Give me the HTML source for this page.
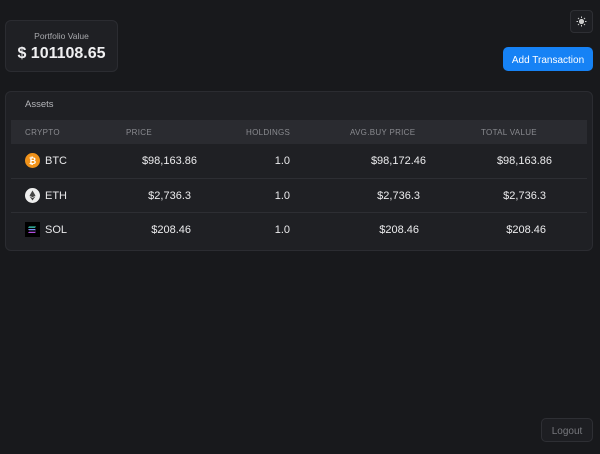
<!DOCTYPE html>
<html><head><style>
*{margin:0;padding:0;box-sizing:border-box}
body{width:600px;height:454px;background:#18191c;font-family:"Liberation Sans",sans-serif;color:#e8e8ea;position:relative;overflow:hidden}
.a{position:absolute}
.card{background:#1f2024;border:1px solid #2b2c31;border-radius:6px}
.h{font-size:8px;color:#8a8b90;letter-spacing:.3px;top:128px}
.v{font-size:11px;color:#ececee;text-align:right}
.sep{left:11px;width:576px;height:1px;background:#2d2e33}
</style></head><body>
<div class="a" style="left:570px;top:10px;width:23px;height:23px;border:1px solid #2e2f34;border-radius:4px;background:#1d1e22">
<svg width="23" height="23" viewBox="0 0 23 23" style="position:absolute;left:-1px;top:-1px"><circle cx="11.5" cy="11.5" r="2.6" fill="#ccc"/><g stroke="#ccc" stroke-width="1"><path d="M11.5 6.5v1.5M11.5 15v1.5M6.5 11.5h1.5M15 11.5h1.5M8 8l1 1M14 14l1 1M8 15l1-1M14 9l1-1"/></g></svg></div>
<div class="a card" style="left:5px;top:20px;width:113px;height:52px">
<div class="a" style="left:0;right:0;top:10px;text-align:center;font-size:8.5px;color:#a8a9ad">Portfolio Value</div>
<div class="a" style="left:0;right:0;top:24px;text-align:center;font-size:16px;font-weight:bold;color:#f0f0f2">$ 101108.65</div></div>
<div class="a" style="left:503px;top:47px;width:90px;height:24px;background:#1682f5;border-radius:5px;color:#fff;font-size:10px;text-align:center;line-height:27px">Add Transaction</div>
<div class="a card" style="left:5px;top:91px;width:588px;height:160px"></div>
<div class="a" style="left:25px;top:99px;font-size:9.5px;color:#b4b5b9">Assets</div>
<div class="a" style="left:11px;top:120px;width:576px;height:24px;background:#2a2b30"></div>
<div class="a h" style="left:25px">CRYPTO</div>
<div class="a h" style="left:126px">PRICE</div>
<div class="a h" style="left:246px">HOLDINGS</div>
<div class="a h" style="left:350px">AVG.BUY PRICE</div>
<div class="a h" style="left:481px">TOTAL VALUE</div>
<div class="a sep" style="top:178px"></div>
<div class="a sep" style="top:212px"></div>
<svg class="a" style="left:25px;top:153px" width="15" height="15"><circle cx="7.5" cy="7.5" r="7.5" fill="#f0921a"/><text x="7.5" y="11" font-size="9" font-weight="bold" fill="#fff" text-anchor="middle" font-family="Liberation Sans">₿</text></svg>
<svg class="a" style="left:25px;top:188px" width="15" height="15"><circle cx="7.5" cy="7.5" r="7.5" fill="#eee"/><path d="M7.5 2.5L4.5 7.6 7.5 9.3 10.5 7.6Z M4.5 8.3L7.5 12.5 10.5 8.3 7.5 10Z" fill="#444"/></svg>
<svg class="a" style="left:25px;top:222px" width="15" height="15"><rect width="15" height="15" fill="#000"/><path d="M4 4.5h7l-1 1.3H3Z" fill="#3fd8c0"/><path d="M3 7h7l1 1.2H4Z" fill="#7a8ef0"/><path d="M4 9.7h7l-1 1.3H3Z" fill="#b04ee0"/></svg>
<div class="a" style="left:45px;top:155px;font-size:11px">BTC</div>
<div class="a" style="left:45px;top:190px;font-size:11px">ETH</div>
<div class="a" style="left:45px;top:224px;font-size:11px">SOL</div>
<div class="a v" style="right:403px;top:155px">$98,163.86</div>
<div class="a v" style="right:409px;top:190px">$2,736.3</div>
<div class="a v" style="right:409px;top:224px">$208.46</div>
<div class="a v" style="right:310px;top:155px">1.0</div>
<div class="a v" style="right:310px;top:190px">1.0</div>
<div class="a v" style="right:310px;top:224px">1.0</div>
<div class="a v" style="right:174px;top:155px">$98,172.46</div>
<div class="a v" style="right:180px;top:190px">$2,736.3</div>
<div class="a v" style="right:181px;top:224px">$208.46</div>
<div class="a v" style="right:48px;top:155px">$98,163.86</div>
<div class="a v" style="right:54px;top:190px">$2,736.3</div>
<div class="a v" style="right:54px;top:224px">$208.46</div>
<div class="a" style="left:541px;top:418px;width:52px;height:24px;border:1px solid #2e2f34;border-radius:5px;background:#1d1e22;color:#77787d;font-size:10px;text-align:center;line-height:25px">Logout</div>
</body></html>
